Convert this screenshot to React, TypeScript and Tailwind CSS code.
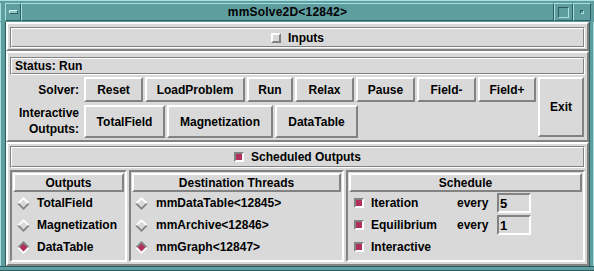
import React from "react"

const raised = "border-2 border-t-white border-l-white border-b-[#828282] border-r-[#828282]"
const sunken = "border-2 border-t-[#828282] border-l-[#828282] border-b-white border-r-white"
const tealRaised = "border border-t-[#a8e0e0] border-l-[#a8e0e0] border-b-[#2f5c5c] border-r-[#2f5c5c]"

function Groove({ className = "", children }: { className?: string; children?: React.ReactNode }) {
  return (
    <div className={`border border-t-[#828282] border-l-[#828282] border-b-white border-r-white ${className}`}>
      <div className="h-full border border-t-white border-l-white border-b-[#828282] border-r-[#828282] flex items-center">
        {children}
      </div>
    </div>
  )
}

function Btn({ label, w, h = "h-full" }: { label: string; w: string; h?: string }) {
  return <div className={`${raised} ${w} ${h} flex items-center justify-center shrink-0`}>{label}</div>
}

function Check({ on }: { on: boolean }) {
  return (
    <div className={`w-[10px] h-[10px] shrink-0 border-2 ${on ? "border-t-[#828282] border-l-[#828282] border-b-white border-r-white bg-[#b03060]" : "border-t-white border-l-white border-b-[#828282] border-r-[#828282] bg-[#d9d9d9]"}`} />
  )
}

function Diamond({ on }: { on: boolean }) {
  const top = on ? "#828282" : "#ffffff"
  const bottom = on ? "#ffffff" : "#828282"
  return (
    <svg width="13" height="13" viewBox="0 0 13 13" className="shrink-0">
      <polygon points="0,6.5 6.5,0 13,6.5" fill={top} />
      <polygon points="0,6.5 6.5,13 13,6.5" fill={bottom} />
      <polygon points="2.5,6.5 6.5,2.5 10.5,6.5 6.5,10.5" fill={on ? "#b03060" : "#d9d9d9"} />
    </svg>
  )
}

function Header({ label }: { label: string }) {
  return <div className={`${raised} h-[19px] flex items-center justify-center`}>{label}</div>
}

export default function App() {
  return (
    <div className="w-[594px] h-[271px] bg-[#5f9ea0] flex flex-col font-['Liberation_Sans',Arial,sans-serif] font-bold text-[12px] text-black leading-none select-none">
      {/* title bar */}
      <div className="h-[22px] flex pt-[2px] pb-[1px] border-t border-t-[#a8e0e0]">
        <div className="w-[5px] border-l border-l-[#a8e0e0]" />
        <div className={`${tealRaised} w-[16px] flex items-center justify-center`}>
          <div className="w-[9px] h-[4px] bg-[#8fcaca] border border-t-[#d0f0f0] border-l-[#d0f0f0] border-b-[#2f5c5c] border-r-[#2f5c5c]" />
        </div>
        <div className={`${tealRaised} flex-1 flex items-center justify-center text-[12px] tracking-[0.2px]`}>mmSolve2D&lt;12842&gt;</div>
        <div className={`${tealRaised} w-[19px] flex items-center justify-center`}>
          <div className="w-[11px] h-[11px] border border-t-[#2f5c5c] border-l-[#2f5c5c] border-b-[#a8e0e0] border-r-[#a8e0e0]" />
        </div>
        <div className={`${tealRaised} w-[18px] flex items-center justify-center`}>
          <div className="w-[4px] h-[4px] border border-t-[#2f5c5c] border-l-[#2f5c5c] border-b-[#a8e0e0] border-r-[#a8e0e0]" />
        </div>
        <div className="w-[3px]" />
      </div>

      <div className="flex h-[244px]">
        <div className="w-[6px] border-l border-l-[#a8e0e0] border-r border-r-[#2f5c5c]" />
        <div className="w-[583px] bg-[#d9d9d9] flex flex-col">
          {/* inputs */}
          <div className={`${raised} h-[29px] px-[2px] pt-[3px] pb-[1px]`}>
            <Groove className="h-[21px]">
              <div className="flex-1 flex items-center justify-center gap-[7px]">
                <Check on={false} />
                <span>Inputs</span>
              </div>
            </Groove>
          </div>

          {/* solver */}
          <div className={`${raised} h-[91px] px-[2px] pt-[4px] pb-[2px] flex flex-col gap-[2px]`}>
            <Groove className="h-[18px]">
              <span className="pl-[3px]">Status: Run</span>
            </Groove>
            <div className="flex flex-1">
              <div className="w-[74px] flex flex-col pr-[5px] text-right">
                <div className="h-[25px] flex items-center justify-end">Solver:</div>
                <div className="h-[36px] flex flex-col justify-center items-end gap-[2px] leading-[14px] pt-[2px]">
                  <span>Interactive</span>
                  <span>Outputs:</span>
                </div>
              </div>
              <div className="flex flex-col gap-[3px]">
                <div className="flex gap-[2px] h-[25px]">
                  <Btn label="Reset" w="w-[59px]" />
                  <Btn label="LoadProblem" w="w-[100px]" />
                  <Btn label="Run" w="w-[46px]" />
                  <Btn label="Relax" w="w-[59px]" />
                  <Btn label="Pause" w="w-[59px]" />
                  <Btn label="Field-" w="w-[59px]" />
                  <Btn label="Field+" w="w-[58px]" />
                </div>
                <div className="flex gap-[2px] h-[33px]">
                  <Btn label="TotalField" w="w-[81px]" />
                  <Btn label="Magnetization" w="w-[106px]" />
                  <Btn label="DataTable" w="w-[83px]" />
                </div>
              </div>
              <div className="ml-[2px]">
                <Btn label="Exit" w="w-[46px]" h="h-[60px]" />
              </div>
            </div>
          </div>

          {/* scheduled outputs */}
          <div className={`${raised} flex-1 px-[2px] pt-[2px] pb-[2px] flex flex-col gap-[2px]`}>
            <Groove className="h-[22px]">
              <div className="flex-1 flex items-center justify-center gap-[7px]">
                <Check on={true} />
                <span>Scheduled Outputs</span>
              </div>
            </Groove>
            <div className="flex gap-[2px] flex-1">
              <div className={`${sunken} w-[117px] p-[1px] flex flex-col`}>
                <Header label="Outputs" />
                {[["TotalField", false], ["Magnetization", false], ["DataTable", true]].map(([t, on]) => (
                  <div key={t as string} className="h-[22px] flex items-center gap-[7px] pl-[4px]">
                    <Diamond on={on as boolean} />
                    <span>{t as string}</span>
                  </div>
                ))}
              </div>
              <div className={`${sunken} w-[215px] p-[1px] flex flex-col`}>
                <Header label="Destination Threads" />
                {[["mmDataTable<12845>", false], ["mmArchive<12846>", false], ["mmGraph<12847>", true]].map(([t, on]) => (
                  <div key={t as string} className="h-[22px] flex items-center gap-[8px] pl-[3px]">
                    <Diamond on={on as boolean} />
                    <span>{t as string}</span>
                  </div>
                ))}
              </div>
              <div className={`${sunken} flex-1 p-[1px] flex flex-col`}>
                <Header label="Schedule" />
                {[["Iteration", "5"], ["Equilibrium", "1"], ["Interactive", null]].map(([t, v]) => (
                  <div key={t as string} className="h-[22px] flex items-center pl-[5px]">
                    <Check on={true} />
                    <span className="ml-[7px] w-[86px]">{t}</span>
                    {v !== null && (
                      <>
                        <span className="w-[40px]">every</span>
                        <div className={`${sunken} w-[34px] h-[20px] flex items-center pl-[1px] text-[13px]`}>{v}</div>
                      </>
                    )}
                  </div>
                ))}
              </div>
            </div>
          </div>
        </div>
        <div className="w-[5px] border-l border-l-[#2f5c5c] border-r border-r-[#a8e0e0]" />
      </div>
      <div className="h-[5px] border-t border-t-[#2f5c5c] border-b border-b-[#2f5c5c]" />
    </div>
  )
}
